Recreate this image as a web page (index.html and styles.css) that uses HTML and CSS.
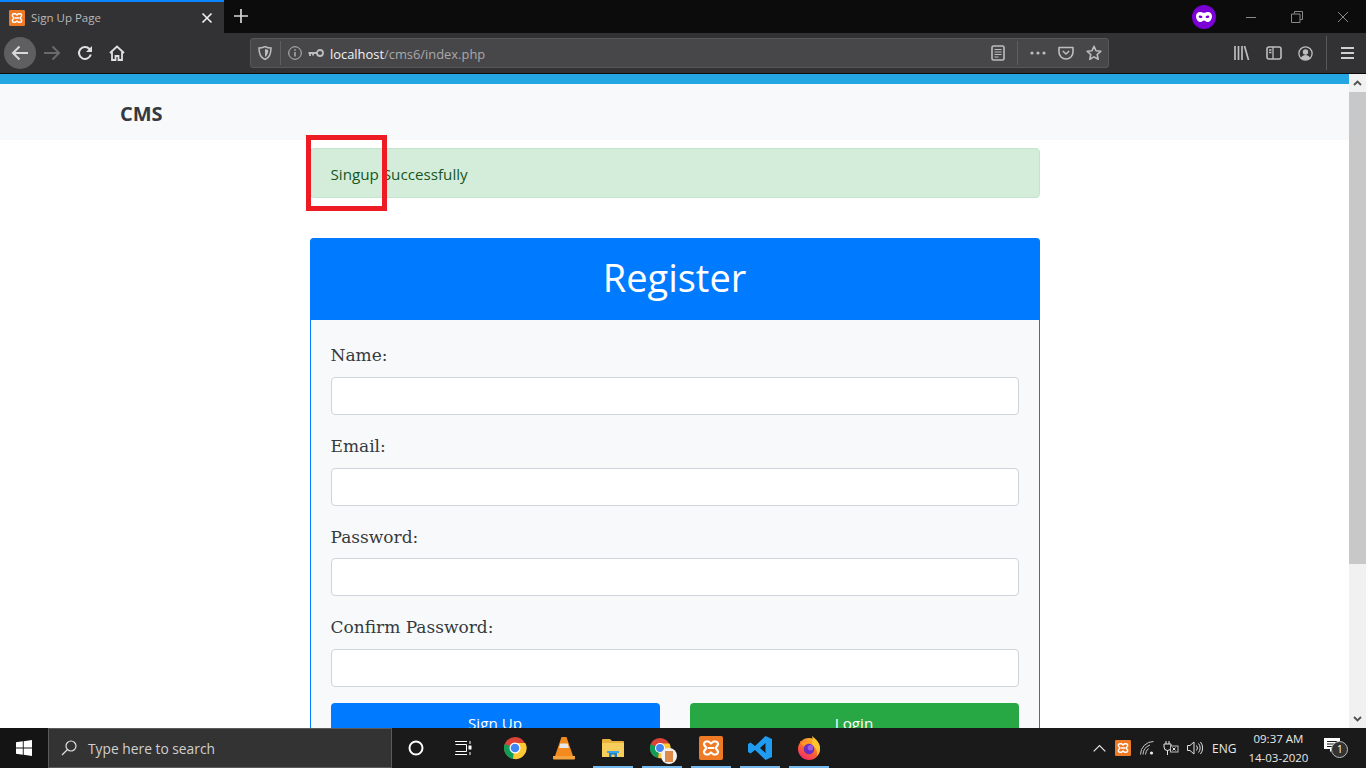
FILE: index.html
```html
<!DOCTYPE html>
<html lang="en">
<head>
<meta charset="utf-8">
<title>Sign Up Page</title>
<link rel="stylesheet" href="styles.css">
</head>
<body>
<svg class="defs" width="0" height="0" aria-hidden="true">
  <defs>
    <linearGradient id="fx" x1="0.8" y1="0" x2="0.2" y2="1">
      <stop offset="0" stop-color="#ffc42e"/>
      <stop offset="0.5" stop-color="#ff6b2b"/>
      <stop offset="1" stop-color="#f0256f"/>
    </linearGradient>
  </defs>
  <symbol id="xampp" viewBox="0 0 24 24">
    <rect width="24" height="24" rx="2" fill="#ef7a26"/>
    <path d="M7.500 5.500h2l2.500 2 2.500-2h2a2.500 2.500 0 0 1 2 4L16.500 12l2 2.500a2.500 2.500 0 0 1-2 4h-2l-2.500-2-2.500 2h-2a2.500 2.500 0 0 1-2-4l2-2.500-2-2.500a2.500 2.500 0 0 1 2-4zM9 12h6" fill="none" stroke="#fff" stroke-width="2.200" stroke-linejoin="round"/>
  </symbol>
  <symbol id="chrome" viewBox="0 0 24 24">
    <circle cx="12" cy="12" r="11" fill="#db4437"/>
    <path d="M12 12 1.700 8A11 11 0 0 0 10 22.800z" fill="#0f9d58"/>
    <path d="M12 7h10.300A11 11 0 0 1 10 22.800z" fill="#fcc934"/>
    <circle cx="12" cy="12" r="5.500" fill="#fff"/>
    <circle cx="12" cy="12" r="4.300" fill="#4285f4"/>
  </symbol>
</svg>
<div class="browser">
  <header class="tabbar">
    <div class="tab">
      <svg class="fav" width="16" height="16"><use href="#xampp"/></svg>
      <span class="tab-title">Sign Up Page</span>
      <svg class="tab-close" width="12" height="12" viewBox="0 0 12 12"><path d="M1.500 1.500l9 9M10.500 1.500l-9 9" stroke="#f2f2f2" stroke-width="1.600"/></svg>
    </div>
    <svg class="newtab" width="14" height="14" viewBox="0 0 14 14"><path d="M7 0v14M0 7h14" stroke="#d8d8d8" stroke-width="1.700"/></svg>
    <div class="tab-spacer"></div>
    <div class="mask"><svg width="16" height="10" viewBox="0 0 16 10"><path fill-rule="evenodd" d="M4 0c1.600 0 2.800.8 4 .8S10.400 0 12 0c2.400 0 4 1.800 4 4.200C16 7 14.200 10 11.500 10 9.800 10 9 8.500 8 8.500S6.200 10 4.500 10C1.800 10 0 7 0 4.200 0 1.800 1.600 0 4 0zM4.300 3.500C3.300 3.500 2.700 4 2.700 4.700s1 1.300 2 1.300 1.700-.5 1.700-1.100-1-1.400-2.100-1.400zm7.400 0c-1.100 0-2.100.8-2.100 1.400s.7 1.100 1.700 1.100 2-.6 2-1.300-.6-1.200-1.600-1.200z" fill="#fff"/></svg></div>
    <div class="winctl">
      <svg width="12" height="12" viewBox="0 0 12 12"><path d="M1 6.500h10" stroke="#8a8a8a"/></svg>
      <svg width="12" height="12" viewBox="0 0 12 12"><path d="M3.500 2.500V.5h8v8h-2M.5 3h8.500v8.500H.5z" fill="none" stroke="#8a8a8a"/></svg>
      <svg width="12" height="12" viewBox="0 0 12 12"><path d="M1 1l10 10M11 1L1 11" stroke="#8a8a8a"/></svg>
    </div>
  </header>
  <nav class="toolbar">
    <div class="nav-btn back"><svg width="18" height="16" viewBox="0 0 18 16"><path d="M17 8H2M8.500 1.500 2 8l6.500 6.500" fill="none" stroke="#d9d9d9" stroke-width="2"/></svg></div>
    <div class="nav-btn"><svg width="18" height="16" viewBox="0 0 18 16"><path d="M1 8h15M9.500 1.500 16 8l-6.500 6.500" fill="none" stroke="#6a6a6c" stroke-width="2"/></svg></div>
    <div class="nav-btn"><svg width="16" height="16" viewBox="0 0 16 16"><path d="M13.800 9.500A6 6 0 1 1 12.500 4L14 5.500" fill="none" stroke="#e0e0e0" stroke-width="2"/><path d="M15 1v6H9z" fill="#e0e0e0"/></svg></div>
    <div class="nav-btn"><svg width="16" height="16" viewBox="0 0 16 16"><path d="M1 8 8 1.500 15 8M3 7v8h3.500v-4h3v4H13V7" fill="none" stroke="#e0e0e0" stroke-width="1.800"/></svg></div>
    <div class="urlbar">
      <svg class="ub-shield" width="14" height="14" viewBox="0 0 14 14"><path d="M1 2c2 0 4-.5 6-1.500C9 1.500 11 2 13 2c0 5-1 9.500-6 11.500C2 11.500 1 7 1 2z" fill="none" stroke="#bdbdbd" stroke-width="1.500"/><path d="M7 3v8c2-1.200 3.200-3.600 3.400-7z" fill="#bdbdbd"/></svg>
      <span class="ub-sep"></span>
      <svg class="ub-info" width="14" height="14" viewBox="0 0 14 14"><circle cx="7" cy="7" r="6.300" fill="none" stroke="#bdbdbd"/><path d="M7 6v4.500M7 3.300v1.500" stroke="#bdbdbd" stroke-width="1.300"/></svg>
      <svg class="ub-key" width="16" height="9" viewBox="0 0 16 9"><circle cx="12" cy="4" r="3" fill="none" stroke="#bdbdbd" stroke-width="1.800"/><path d="M9 4H.5M2 4v3M5 4v2.500" stroke="#bdbdbd" stroke-width="1.800"/></svg>
      <span class="url"><span class="url-host">localhost</span>/cms6/index.php</span>
      <svg class="ub-reader" width="14" height="16" viewBox="0 0 14 16"><rect x="1" y="1" width="12" height="14" rx="1.500" fill="none" stroke="#bdbdbd" stroke-width="1.600"/><path d="M3.500 4.500h7M3.500 7h7M3.500 9.500h7M3.500 12h4" stroke="#bdbdbd"/></svg>
      <span class="ub-sep tall"></span>
      <svg class="ub-dots" width="16" height="4" viewBox="0 0 16 4"><circle cx="2" cy="2" r="1.600" fill="#bdbdbd"/><circle cx="8" cy="2" r="1.600" fill="#bdbdbd"/><circle cx="14" cy="2" r="1.600" fill="#bdbdbd"/></svg>
      <svg class="ub-pocket" width="16" height="14" viewBox="0 0 16 14"><path d="M1 1.500h14V6a7 7 0 0 1-14 0z" fill="none" stroke="#bdbdbd" stroke-width="1.600" stroke-linejoin="round"/><path d="M4.800 5 8 8l3.200-3" fill="none" stroke="#bdbdbd" stroke-width="1.600"/></svg>
      <svg class="ub-star" width="16" height="16" viewBox="0 0 16 16"><path d="M8 1.300l2 4.500 4.800.5-3.600 3.200 1 4.800L8 11.900l-4.200 2.400 1-4.800L1.200 6.300 6 5.800z" fill="none" stroke="#bdbdbd" stroke-width="1.600" stroke-linejoin="round"/></svg>
    </div>
    <div class="tb-right">
      <svg width="16" height="14" viewBox="0 0 16 14"><path d="M1 0v14M4.500 0v14M8 0v14M10.500 0l4 14" stroke="#bdbdbd" stroke-width="1.700"/></svg>
      <svg width="16" height="14" viewBox="0 0 16 14"><rect x="1" y="1" width="14" height="12" rx="2" fill="none" stroke="#bdbdbd" stroke-width="1.600"/><path d="M7 1v12M3 4h2.500M3 6.500h2.500" stroke="#bdbdbd" stroke-width="1.300"/></svg>
      <svg width="15" height="15" viewBox="0 0 15 15"><circle cx="7.500" cy="7.500" r="6.600" fill="none" stroke="#bdbdbd" stroke-width="1.300"/><circle cx="7.500" cy="6" r="2.700" fill="#bdbdbd"/><path d="M2.800 12c1-2 2.800-3 4.700-3s3.700 1 4.700 3a6.500 6.500 0 0 1-9.400 0z" fill="#bdbdbd"/></svg>
      <span class="tb-sep"></span>
      <svg class="tb-menu" width="13" height="12" viewBox="0 0 13 12"><path d="M0 1h13M0 6h13M0 11h13" stroke="#d0d0d0" stroke-width="1.800"/></svg>
    </div>
  </nav>
  <div class="viewport">
    <main class="page">
      <div class="topstrip"></div>
      <div class="navbar"><span class="brand">CMS</span></div>
      <div class="container">
        <div class="alert">Singup Successfully</div>
        <section class="card">
          <h2 class="card-head">Register</h2>
          <form class="card-body">
            <div class="field"><label class="label">Name:</label><input class="input" type="text"></div>
            <div class="field"><label class="label">Email:</label><input class="input" type="text"></div>
            <div class="field"><label class="label">Password:</label><input class="input" type="text"></div>
            <div class="field"><label class="label">Confirm Password:</label><input class="input" type="text"></div>
            <div class="actions">
              <div class="btn btn-primary">Sign Up</div>
              <div class="btn btn-success">Login</div>
            </div>
          </form>
        </section>
      </div>
      <div class="annotation"></div>
    </main>
    <aside class="scrollbar">
      <svg class="sb-arrow" width="9" height="6" viewBox="0 0 9 6"><path d="M1 5l3.500-3.500L8 5" fill="none" stroke="#505050" stroke-width="1.800"/></svg>
      <div class="sb-track"><div class="sb-thumb"></div></div>
      <svg class="sb-arrow" width="9" height="6" viewBox="0 0 9 6"><path d="M1 1l3.500 3.500L8 1" fill="none" stroke="#505050" stroke-width="1.800"/></svg>
    </aside>
  </div>
  <footer class="taskbar">
    <div class="start"><svg width="16" height="16" viewBox="0 0 16 16"><path d="M0 2.300 6.800 1.300V7.500H0zM7.700 1.200 16 0V7.500H7.700zM0 8.500H6.800V14.700L0 13.700zM7.700 8.500H16V16L7.700 14.800z" fill="#fff"/></svg></div>
    <div class="search">
      <svg width="16" height="16" viewBox="0 0 16 16"><circle cx="10" cy="6" r="5" fill="none" stroke="#e0e0e0" stroke-width="1.200"/><path d="M6.500 9.500 1 15" stroke="#e0e0e0" stroke-width="1.300"/></svg>
      <span class="search-text">Type here to search</span>
    </div>
    <div class="task-icons">
      <div class="ti ti-cortana"><svg width="16" height="16" viewBox="0 0 16 16"><circle cx="8" cy="8" r="6.500" fill="none" stroke="#fff" stroke-width="2"/></svg></div>
      <div class="ti ti-view"><svg width="18" height="14" viewBox="0 0 18 14"><path d="M.5 3.500h11v7H.5M0 .5h12M0 13.500h12M15 0v3M15 11v3" fill="none" stroke="#fff"/><rect x="13.500" y="4.500" width="3" height="4" fill="#fff"/></svg></div>
      <div class="ti"><svg width="24" height="24"><use href="#chrome"/></svg></div>
      <div class="ti"><svg width="22" height="24" viewBox="0 0 22 24"><path d="M8.500 1h5L20 20H2z" fill="#f28a1e"/><path d="M7.300 7.500h7.400l1.300 4.500H6z" fill="#e8e8e8"/><path d="M0 20h22v2.500a1 1 0 0 1-1 1H1a1 1 0 0 1-1-1z" fill="#f7a33c"/></svg></div>
      <div class="ti"><svg width="24" height="20" viewBox="0 0 24 20"><path d="M1 2a1 1 0 0 1 1-1h7l2 2h11a1 1 0 0 1 1 1v3H1z" fill="#e8b23c"/><path d="M1 5h22v14H1z" fill="#f7ce5c"/><path d="M8 19v-5h8v5h-2.500v-2.500h-3V19z" fill="#1f7fc4"/><path d="M6 13h12v2H6z" fill="#3fa4e6"/></svg></div>
      <div class="ti chrome-stack"><svg width="22" height="22"><use href="#chrome"/></svg><span class="badge-photo"><span class="badge-inner"></span></span></div>
      <div class="ti"><svg width="24" height="24"><use href="#xampp"/></svg></div>
      <div class="ti"><svg width="24" height="24" viewBox="0 0 24 24"><path d="M17.500 0 24 3v18l-6.500 3L7 14l-4.500 3.500L0 16V8l2.500-1.500L7 10zM17.500 7l-5.500 5 5.500 5z" fill="#1f9cf0" fill-rule="evenodd"/></svg></div>
      <div class="ti"><svg width="24" height="24" viewBox="0 0 24 24"><circle cx="12" cy="13" r="11" fill="url(#fx)"/><path d="M15 0c4 3 8 7 8 12 0 3-1 6-3 8 1-5-1-9-6-11 2-3 2-6 1-9z" fill="#ffc42e"/><path d="M3 5c1 0 2 1 3 2 2-2 6-2 8 0-3 0-5 1-6 3-2 0-4-2-5-5z" fill="#ff9a2a"/><circle cx="12" cy="13" r="5.300" fill="#6a2fc0"/><circle cx="13.500" cy="11.800" r="2.800" fill="#9a5be0"/></svg></div>
    </div>
    <div class="running">
      <span class="run-bar"></span><span class="run-bar"></span><span class="run-bar"></span><span class="run-bar"></span><span class="run-bar"></span>
    </div>
    <div class="tray">
      <svg width="13" height="8" viewBox="0 0 13 8"><path d="M.7 7.300 6.500 1.500l5.800 5.800" fill="none" stroke="#e8e8e8" stroke-width="1.200"/></svg>
      <svg width="16" height="16"><use href="#xampp"/></svg>
      <svg width="14" height="14" viewBox="0 0 14 14"><path d="M.5 13.500a13 13 0 0 1 13-13M3 13.500a10.500 10.500 0 0 1 7-9.500M5.500 13.500a8 8 0 0 1 3-6" fill="none" stroke="#c8c8c8"/><circle cx="11.500" cy="12" r="1.600" fill="#e8e8e8"/></svg>
      <svg width="16" height="14" viewBox="0 0 16 14"><path d="M3 0v3M6 0v3M1 3h7v3a3.500 3.500 0 0 1-7 0zM4.500 9.500V14" fill="none" stroke="#e8e8e8"/><rect x="7.500" y="5" width="7.500" height="6" fill="#1a1a1a" stroke="#bdbdbd"/><path d="M9.500 6.500l3 3M12.500 6.500l-3 3" stroke="#e8e8e8"/></svg>
      <svg class="tray-vol" width="16" height="14" viewBox="0 0 16 14"><path d="M.5 4.500h2.500L7 1v12L3 9.500H.5zM9.500 4.500a4 4 0 0 1 0 5M11.500 2.500a7 7 0 0 1 0 9M13.500 1a9.500 9.500 0 0 1 0 12" fill="none" stroke="#e0e0e0"/></svg>
      <span class="tray-lang">ENG</span>
      <div class="clock"><span>09:37 AM</span><span>14-03-2020</span></div>
      <div class="notif">
        <svg width="16" height="14" viewBox="0 0 16 14"><path d="M0 0h16v11H9l-3 3v-3H0z" fill="#fff"/><path d="M3 3.500h10M3 6h10M3 8.500h7" stroke="#1a1a1a"/></svg>
        <span class="notif-count">1</span>
      </div>
    </div>
  </footer>
</div>
</body>
</html>
```
FILE: styles.css
```css
* { box-sizing: border-box; }
html, body { margin: 0; height: 100%; overflow: hidden; }
body { font-family: "Open Sans", "Noto Sans", sans-serif; background: #fff; }
.defs { position: absolute; }
.browser { display: flex; flex-direction: column; width: 1366px; height: 768px; }

/* tab bar */
.tabbar { height: 33px; background: #0c0c0d; display: flex; align-items: center; flex: none; }
.tab { width: 224px; height: 33px; background: #323234; border-top: 2px solid #0a84ff; display: flex; align-items: center; padding: 0 11px 0 9px; }
.fav { flex: none; }
.tab-title { margin-left: 6px; font-size: 11.500px; color: #b9b9bb; flex: 1; }
.tab-close { flex: none; }
.newtab { margin: -2px 0 0 10px; }
.tab-spacer { flex: 1; }
.mask { width: 24px; height: 24px; border-radius: 50%; background: #7a00d6; display: flex; align-items: center; justify-content: center; margin-right: 29px; }
.winctl { display: flex; gap: 34px; width: 121px; }

/* toolbar */
.toolbar { height: 41px; background: #323234; border-bottom: 1px solid #0c0c0d; display: flex; align-items: center; flex: none; padding-left: 4px; }
.nav-btn { width: 32.330px; height: 32px; display: flex; align-items: center; justify-content: center; border-radius: 50%; flex: none; }
.back { background: #5f5f61; }
.urlbar { margin-left: 116.700px; width: 859px; height: 30px; background: #474749; border: 1px solid #58585a; border-radius: 3px; display: flex; align-items: center; padding-left: 7px; flex: none; }
.ub-sep { width: 1px; height: 24px; background: #5f5f61; margin-left: 8px; }
.ub-sep.tall { margin-left: 12px; }
.ub-info { margin-left: 7px; }
.ub-key { margin-left: 6px; }
.url { margin: 2px 0 0 6px; font-size: 12.900px; color: #a9a9ab; flex: 1; white-space: nowrap; }
.url-host { color: #f2f2f2; }
.ub-dots { margin-left: 12px; }
.ub-pocket { margin-left: 12px; }
.ub-star { margin-left: 12px; margin-right: 6px; }
.tb-right { display: flex; align-items: center; margin-left: 125px; gap: 16px; }
.tb-sep { width: 1px; height: 34px; background: #58585a; margin-left: -3px; margin-right: -1px; }
.tb-menu { margin-left: -1px; }

/* page */
.viewport { flex: 1; display: flex; min-height: 0; }
.page { flex: 1; position: relative; overflow: hidden; background: #fff; }
.topstrip { height: 10px; background: #23a6e2; }
.navbar { height: 56px; background: #f8f9fa; padding: 2px 0 0 120px; display: flex; align-items: center; }
.brand { font-size: 20px; font-weight: 700; color: #343a40; }
.container { width: 730px; margin: 8px auto 0; }
.alert { height: 50px; background: #d4edda; border: 1px solid #c3e6cb; border-radius: 4px; color: #155724; font-size: 15.200px; padding: 2px 20px 0; display: flex; align-items: center; margin-bottom: 40px; }
.card { border: 1px solid #007bff; border-radius: 4px; background: #f8f9fa; }
.card-head { margin: -1px -1px 0; height: 82px; background: #007bff; color: #fff; font-size: 38px; font-weight: 400; line-height: 78px; text-align: center; border-radius: 4px 4px 0 0; }
.card-body { padding: 20.400px 20px 30px; }
.field { height: 90.670px; display: flex; flex-direction: column; }
.label { font-family: "DejaVu Serif", Georgia, serif; font-size: 17px; color: #343a40; height: 36.670px; line-height: 30px; flex: none; }
.input { height: 38px; width: 100%; background: #fff; border: 1px solid #ced4da; border-radius: 4px; padding: 0 12px; flex: none; }
.actions { display: flex; gap: 30px; }
.btn { flex: 1; height: 38px; border-radius: 4px 4px 0 0; color: #fff; font-size: 15.200px; text-align: center; line-height: 40px; }
.btn-primary { background: #007bff; }
.btn-success { background: #28a745; }
.annotation { position: absolute; left: 306px; top: 61px; width: 81px; height: 76px; border: 5px solid #ed1c24; }

/* scrollbar */
.scrollbar { width: 17px; background: #f1f1f1; display: flex; flex-direction: column; align-items: center; }
.sb-arrow { flex: none; margin: 6px 0; }
.sb-track { flex: 1; width: 100%; }
.sb-thumb { height: 472px; background: #c8c8c8; }

/* taskbar */
.taskbar { height: 40px; background: #1a1a1a; display: flex; align-items: center; flex: none; position: relative; }
.start { width: 48px; height: 40px; display: flex; align-items: center; justify-content: center; background: #141414; }
.search { width: 344px; height: 40px; background: #333; border: 1px solid #5a5a5a; display: flex; align-items: center; padding-left: 12px; }
.search-text { margin-left: 11px; font-size: 13.800px; color: #cfcfcf; }
.task-icons { display: flex; align-items: center; }
.ti { width: 49px; height: 40px; display: flex; align-items: center; justify-content: center; position: relative; }
.ti-cortana { margin-left: -1px; }
.ti-view { margin-left: -1px; margin-right: 2px; }
.chrome-stack svg { margin-right: 4px; }
.badge-photo { position: absolute; right: 9px; bottom: 4px; width: 16px; height: 16px; border-radius: 50%; background: #f2f2f2; display: flex; align-items: center; justify-content: center; }
.badge-inner { width: 8px; height: 11px; background: #e08a4a; }
.running { position: absolute; left: 593px; bottom: 0; display: flex; gap: 9px; }
.run-bar { width: 40px; height: 2px; background: #76b9ed; }
.tray { position: absolute; right: 0; top: 0; height: 40px; display: flex; align-items: center; width: 279px; padding-left: 6px; gap: 9px; color: #e8e8e8; }
.tray-vol { margin-left: -1px; }
.tray-lang { font-size: 12px; margin-left: 0; white-space: nowrap; }
.clock { display: flex; flex-direction: column; align-items: center; font-size: 11.500px; line-height: 19px; width: 58px; margin-left: 4px; white-space: nowrap; flex: none; }
.notif { position: relative; margin-left: 8px; margin-top: -4px; }
.notif-count { position: absolute; left: 7px; top: 6px; width: 17px; height: 17px; border-radius: 50%; background: #333; border: 1px solid #bbb; font-size: 10px; line-height: 15px; text-align: center; color: #fff; }
```
